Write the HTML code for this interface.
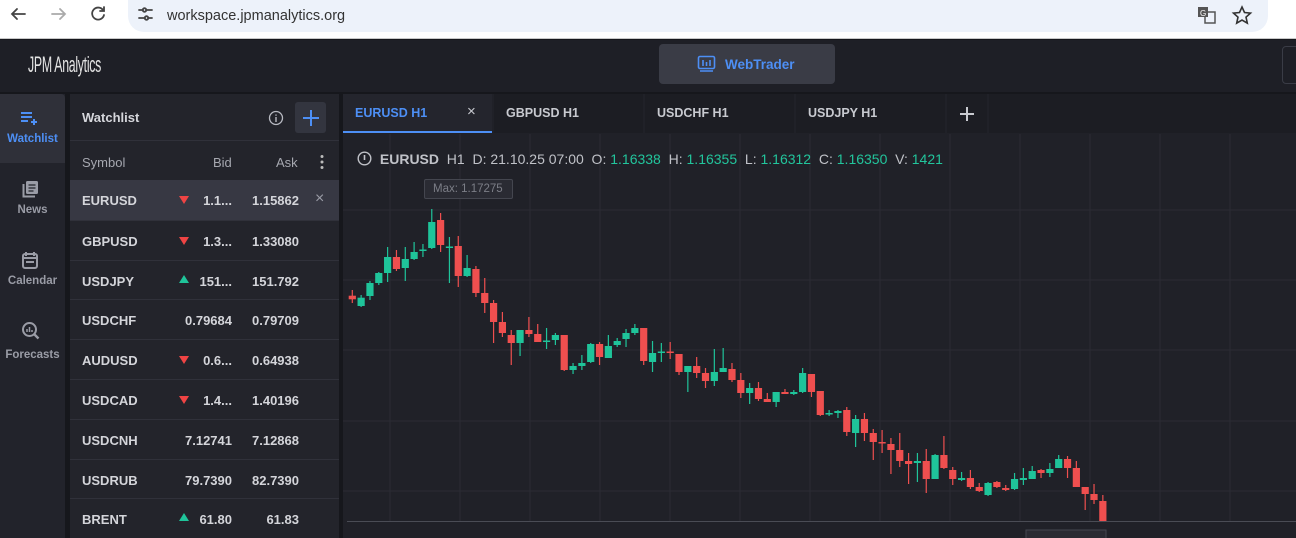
<!DOCTYPE html>
<html><head><meta charset="utf-8">
<style>
*{box-sizing:border-box;margin:0;padding:0}
body{width:1296px;height:538px;overflow:hidden;background:#16171c;font-family:"Liberation Sans",sans-serif;position:relative}
.abs{position:absolute}
.chrome{left:0;top:0;width:1296px;height:39px;background:#fff;border-bottom:1px solid #c8c8c8}
.url{left:128px;top:0;width:1140px;height:32px;background:#edf2fa;border-radius:0 0 16px 16px}
.hdr{left:0;top:40px;width:1296px;height:52px;background:#1e1f26}
.side{left:0;top:94px;width:65px;height:444px;background:#22232b}
.wl{left:70px;top:94px;width:269px;height:444px;background:#23242b}
.chart{left:343px;top:94px;width:953px;height:444px;background:#202128}
.txt{color:#d6d7dc;font-size:13px;font-weight:bold}
.row{position:absolute;left:0;width:269px;height:40px;border-top:1px solid #30313a}
.row span{position:absolute;top:13px;font-size:13px;font-weight:bold;color:#d4d5da}
.si{position:absolute;width:65px;text-align:center;font-size:11.5px;font-weight:bold;color:#9a9ca6}
.tab{position:absolute;top:0;height:39px;background:#1c1d23;color:#c8cad0;font-size:12.5px;font-weight:bold}
.tab span{position:absolute;left:12px;top:12px}
</style></head><body>
<div class="abs chrome"></div>
<div class="abs url"></div>
<svg class="abs" style="left:0;top:0" width="380" height="32">
<g stroke="#444" stroke-width="1.8" fill="none" stroke-linecap="round">
<path d="M25 14H12M17 9l-5 5 5 5"/>
<path d="M52 14h13M60 9l5 5-5 5" stroke="#aaa"/>
<path d="M103 10a6 6 0 1 0 1 5M104 7v4h-4"/>
<path d="M139 10h4M146 10h6M139 18h6M148 18h4"/><circle cx="144.5" cy="10" r="1.8"/><circle cx="146.5" cy="18" r="1.8"/>
</g>
<text x="167" y="20" font-size="14.5" fill="#333" font-family="Liberation Sans">workspace.jpmanalytics.org</text>
</svg>
<svg class="abs" style="left:1195px;top:4px" width="60" height="24">
<rect x="3" y="3" width="10" height="10" fill="#555"/><rect x="10" y="8" width="10" height="11" fill="none" stroke="#555" stroke-width="1.5"/>
<text x="5" y="12" font-size="8" fill="#fff" font-family="Liberation Sans">G</text>
<path d="M47 3l2.5 5.5 6 .6-4.5 4 1.3 6-5.3-3.1-5.3 3.1 1.3-6-4.5-4 6-.6z" fill="none" stroke="#333" stroke-width="1.6"/>
</svg>

<div class="abs hdr"></div>
<div class="abs" style="left:28px;top:52px;color:#e4e4e4;font-family:'Liberation Sans Narrow','Liberation Sans',sans-serif;font-size:22px;transform:scaleX(0.56);transform-origin:left;letter-spacing:-0.5px">JPM Analytics</div>
<div class="abs" style="left:659px;top:44px;width:176px;height:40px;background:#3a3c46;border-radius:4px"></div>
<svg class="abs" style="left:697px;top:55px" width="20" height="18"><rect x="1.5" y="1.5" width="16" height="12" rx="1.5" fill="none" stroke="#4d8ff5" stroke-width="1.6"/><path d="M6 5v6M9.5 7v4M13 5v6M3 16h13" stroke="#4d8ff5" stroke-width="1.6"/></svg>
<div class="abs" style="left:725px;top:57px;color:#4d8ff5;font-size:13.5px;font-weight:bold">WebTrader</div>
<div class="abs" style="left:1282px;top:46px;width:20px;height:38px;border:1px solid #3a3c46;border-radius:4px"></div>

<div class="abs side"></div>
<div class="abs" style="left:0;top:94px;width:65px;height:69px;background:#2f3039;border-radius:0 4px 0 0"></div>
<svg class="abs" style="left:20px;top:110px" width="22" height="16"><path d="M1 3h11M1 7h11M1 11h7M14 9v6M11 12h6" stroke="#4d8ff5" stroke-width="2"/></svg>
<div class="si" style="top:133px;color:#4d8ff5">Watchlist</div>
<svg class="abs" style="left:21px;top:180px" width="20" height="20"><rect x="5" y="1" width="12" height="13" rx="1.5" fill="#9a9ca6"/><path d="M2.5 4v12.5H14" stroke="#9a9ca6" stroke-width="2" fill="none"/><path d="M7.5 5h7M7.5 8h7M7.5 11h5" stroke="#22232b" stroke-width="1.3"/></svg>
<div class="si" style="top:204px">News</div>
<svg class="abs" style="left:21px;top:251px" width="20" height="20"><rect x="2" y="3" width="14" height="14" rx="2" fill="none" stroke="#9a9ca6" stroke-width="2"/><path d="M5 1v4M13 1v4M3 7h12M5 11h8" stroke="#9a9ca6" stroke-width="2"/></svg>
<div class="si" style="top:275px">Calendar</div>
<svg class="abs" style="left:21px;top:321px" width="20" height="20"><circle cx="8.5" cy="8.5" r="6.5" fill="none" stroke="#9a9ca6" stroke-width="2"/><path d="M13 13l4.5 4.5" stroke="#9a9ca6" stroke-width="2.4"/><path d="M6 11V8M8.5 11V6M11 11V9" stroke="#9a9ca6" stroke-width="1.5"/></svg>
<div class="si" style="top:349px">Forecasts</div>

<div class="abs wl">
 <div class="abs txt" style="left:12px;top:16px">Watchlist</div>
 <svg class="abs" style="left:198px;top:16px" width="16" height="16"><circle cx="8" cy="8" r="6.5" fill="none" stroke="#b8bac2" stroke-width="1.3"/><path d="M8 7v5M8 4.5v1.2" stroke="#b8bac2" stroke-width="1.4"/></svg>
 <div class="abs" style="left:225px;top:8px;width:31px;height:31px;background:#33353f;border-radius:3px"></div>
 <svg class="abs" style="left:231px;top:14px" width="20" height="20"><path d="M10 2v16M2 10h16" stroke="#4d8ff5" stroke-width="2"/></svg>
 <div class="abs" style="left:0;top:46px;width:269px;border-top:1px solid #30313a"></div>
 <div class="abs" style="left:12px;top:61px;color:#a6a8b0;font-size:13px">Symbol</div>
 <div class="abs" style="left:143px;top:61px;color:#a6a8b0;font-size:13px">Bid</div>
 <div class="abs" style="left:206px;top:61px;color:#a6a8b0;font-size:13px">Ask</div>
 <svg class="abs" style="left:249px;top:60px" width="6" height="16"><circle cx="3" cy="2.5" r="1.5" fill="#bbb"/><circle cx="3" cy="8" r="1.5" fill="#bbb"/><circle cx="3" cy="13.5" r="1.5" fill="#bbb"/></svg>
 <div id="rows"></div>
</div>

<div class="abs chart">
 <svg id="ch" class="abs" style="left:0;top:0" width="953" height="444"></svg>
 <div class="tab" style="left:0;width:149px;background:#24252d;border-bottom:2px solid #4d8ff5;color:#4d8ff5"><span>EURUSD H1</span><span style="left:124px;color:#c8cad0;font-weight:normal;font-size:15px;top:9px">×</span></div>
 <div class="tab" style="left:151px;width:149px"><span>GBPUSD H1</span></div>
 <div class="tab" style="left:302px;width:149px"><span>USDCHF H1</span></div>
 <div class="tab" style="left:453px;width:149px"><span>USDJPY H1</span></div>
 <div class="tab" style="left:604px;width:40px"><svg style="position:absolute;left:12px;top:12px" width="16" height="16"><path d="M8 1v14M1 8h14" stroke="#c8cad0" stroke-width="2"/></svg></div>
 <div class="tab" style="left:646px;width:307px"></div>
 <div class="abs" style="left:14px;top:57px;font-size:14px;color:#c0c2c8;white-space:nowrap">
  <svg width="15" height="15" style="vertical-align:-2px"><circle cx="7.5" cy="7.5" r="6.3" fill="none" stroke="#c0c2c8" stroke-width="1.4"/><path d="M7.5 4v5" stroke="#c0c2c8" stroke-width="1.6"/></svg>
  <b style="margin-left:4px">EURUSD</b>&nbsp; H1&nbsp; D: 21.10.25 07:00&nbsp; O: <span style="color:#22c59c">1.16338</span>&nbsp; H: <span style="color:#22c59c">1.16355</span>&nbsp; L: <span style="color:#22c59c">1.16312</span>&nbsp; C: <span style="color:#22c59c">1.16350</span>&nbsp; V: <span style="color:#22c59c">1421</span>
 </div>
 <div class="abs" style="left:81px;top:85px;width:89px;height:20px;border:1px solid #44464f;background:#2a2b33;border-radius:2px;color:#7c7e87;font-size:11.5px;padding:3px 0 0 8px">Max: 1.17275</div>
</div>

<script>
var rows=[["EURUSD","r","1.1...","1.15862"],["GBPUSD","r","1.3...","1.33080"],["USDJPY","g","151...","151.792"],["USDCHF","","0.79684","0.79709"],["AUDUSD","r","0.6...","0.64938"],["USDCAD","r","1.4...","1.40196"],["USDCNH","","7.12741","7.12868"],["USDRUB","","79.7390","82.7390"],["BRENT","g","61.80","61.83"]];
var h="";rows.forEach(function(r,i){var t=86+i*39.8;
h+='<div class="row" style="top:'+t+'px;'+(i==0?'background:#373843;border-top:none':'')+'"><span style="left:12px">'+r[0]+'</span>';
if(r[1]=="r")h+='<svg style="position:absolute;left:109px;top:15px" width="11" height="9"><path d="M0 1h10L5 9z" fill="#ef4444"/></svg>';
if(r[1]=="g")h+='<svg style="position:absolute;left:109px;top:14px" width="11" height="9"><path d="M0 8h10L5 0z" fill="#1fc49a"/></svg>';
h+='<span style="right:107px">'+r[2]+'</span><span style="right:40px">'+r[3]+'</span>';
if(i==0)h+='<span style="left:245px;top:10px;font-weight:normal;color:#9a9ca6;font-size:16px">×</span>';
h+='</div>';});
document.getElementById("rows").innerHTML=h;
var C=[["r",295.7,299.3,290,303],["g",297.7,306,295,307],["g",283,296,281,300],["g",273,283,272,285],["g",257,273,247,282],["r",257,269,250,271],["g",259,268,247,281],["g",252,259,242,260],["g",249.5,250.5,244,257],["g",222,248,209,249],["r",220,245,213,252],["g",246.5,247.5,237,283],["r",246,276,236,287],["g",268,276,255,277],["r",269,293,266,297],["r",293,303,278,313],["r",303,322,300,343],["r",322,333,312,337],["r",335,343,330,365],["g",330,343,330,356],["r",330,334,317,337],["r",334,342,324,342],["g",340.5,341.5,328,349],["g",335,340,333,345],["r",335,370,335,371],["g",366,370,363,374],["g",363,366,355,370],["g",344,362,343,363],["r",344,357,342,365],["g",346,358,335,358],["g",341,345,338,347],["g",333,339,329,347],["g",328,333,324,335],["r",328,361,328,365],["g",353,362,341,372],["g",351.5,352.5,343,362],["r",351.5,352.5,342,359],["r",354,372,354,375],["g",366,372,366,392],["r",366,373,357,378],["r",373,381,368,388],["g",372,381,349,386],["g",368,372,348,372],["r",369,380,363,382],["r",380,393,373,398],["g",388,393,383,404],["r",388,399,382,401],["r",399,402,393,402],["g",392,402,392,407],["r",392,394,389,394],["g",392,394,390,395],["g",373,392,368,393],["r",374,392,374,397],["r",391,415,391,416],["g",413,414,410,416],["g",411,413,410,418],["r",410,432,407,436],["g",419,433,415,447],["r",419,433,413,441],["r",433,442,429,460],["r",442,443,430,453],["r",444,450,438,474],["r",450,461,433,467],["r",461,464,453,484],["g",461,463,453,482],["r",461,479,449,493],["g",455,479,454,479],["r",455,468,436,469],["r",470,479,467,485],["g",478,480,472,481],["r",478,487,470,489],["r",487,491,483,492],["g",483,495,482,496],["r",482,487,481,488],["r",488,490,485,491],["g",479,489,473,490],["g",478,480,468,485],["g",471,479,466,479],["r",470,473,469,478],["g",469,473,463,477],["g",459,468,455,468],["r",459,468,456,478],["r",468,487,461,487],["r",487,494,487,510],["r",494,500,484,504],["r",501,521,495,521]];
var s='';
[210,280,350,421,491].forEach(function(y){s+='<line x1="0" x2="953" y1="'+(y-94)+'" y2="'+(y-94)+'" stroke="#2b2c34"/>';});
for(var x=47;x<953;x+=70)s+='<line y1="40" y2="427" x1="'+x+'" x2="'+x+'" stroke="#2b2c34"/>';
s+='<line x1="4" x2="953" y1="427.5" y2="427.5" stroke="#4a4c55"/>';
C.forEach(function(c,i){var x=352.3+8.83*i-343,col=c[0]=="g"?"#1fc49a":"#ef4f4f";
s+='<line x1="'+x+'" x2="'+x+'" y1="'+(c[3]-94)+'" y2="'+(c[4]-94)+'" stroke="'+col+'" stroke-width="1.2"/>';
var hgt=Math.max(1.5,c[2]-c[1]);s+='<rect x="'+(x-3.6)+'" y="'+(c[1]-94)+'" width="7.2" height="'+hgt+'" fill="'+col+'"/>';});
s+='<rect x="683" y="436" width="80" height="14" fill="#2a2b33" stroke="#44464f"/>';
document.getElementById("ch").innerHTML=s;
</script>
</body></html>
